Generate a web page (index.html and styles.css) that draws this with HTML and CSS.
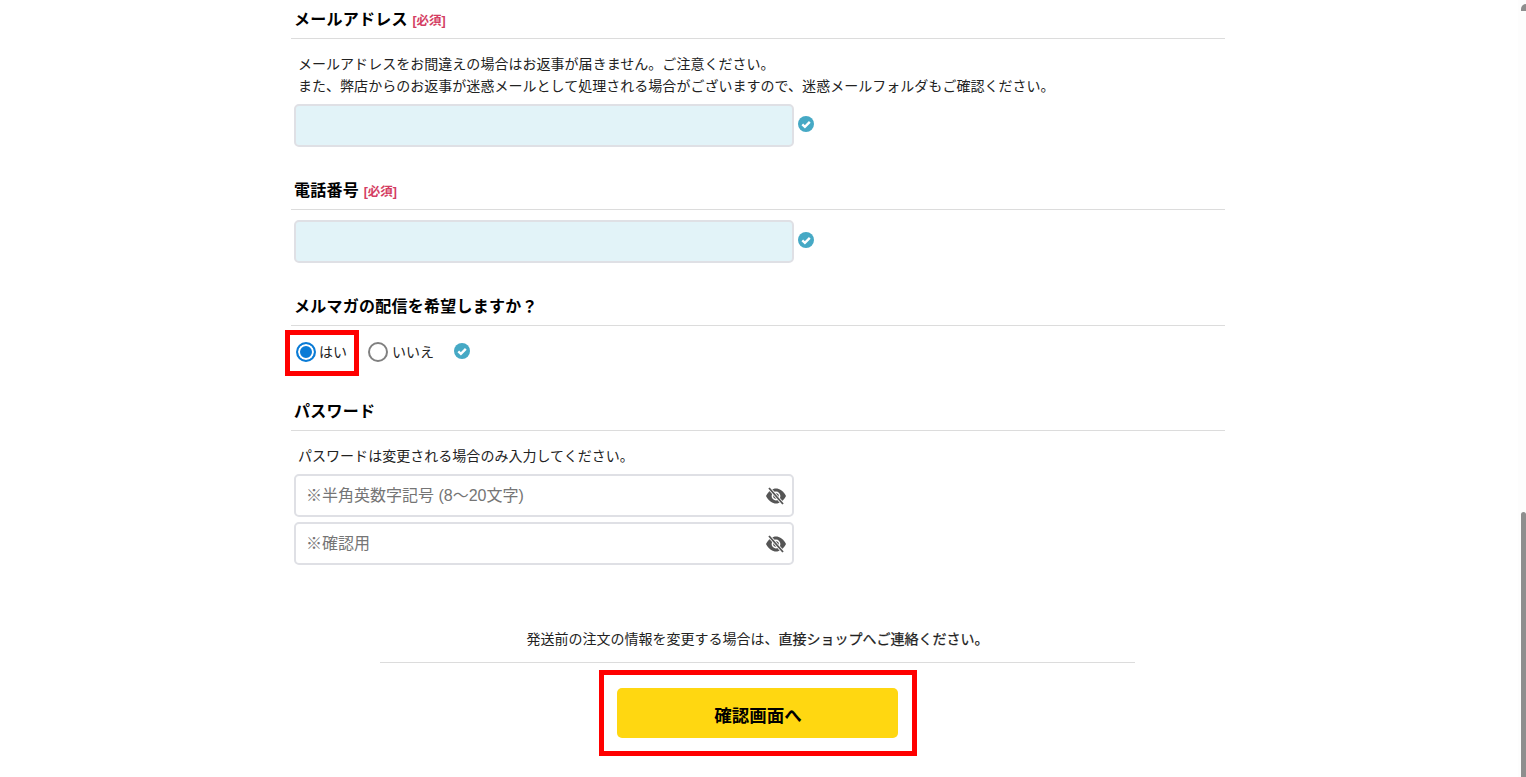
FILE: index.html
```html
<!DOCTYPE html>
<html lang="ja">
<head>
    <meta charset="UTF-8">
    <meta name="viewport" content="width=device-width, initial-scale=1.0">
    <title>お客様情報の変更</title>
    <link rel="stylesheet" href="styles.css">
</head>
<body>

    <svg class="icon-defs" width="0" height="0">
        <symbol id="check" viewBox="0 0 16 16">
            <circle cx="8" cy="8" r="8" fill="#46a9c5"/>
            <path d="M4.3 8.3 L6.9 10.8 L11.8 5.8" fill="none" stroke="#fff" stroke-width="2.4"/>
        </symbol>
        <symbol id="eye-off" viewBox="0 0 22 18">
            <path d="M1 9 C4 3.5 7.5 1.5 11 1.5 C14.5 1.5 18 3.5 21 9 C18 14.5 14.5 16.5 11 16.5 C7.5 16.5 4 14.5 1 9 Z" fill="#555"/>
            <circle cx="11" cy="9" r="3.6" fill="none" stroke="#fff" stroke-width="1.6"/>
            <path d="M4 1 L18 17" stroke="#fff" stroke-width="3.4"/>
            <path d="M4 1 L18 17" stroke="#555" stroke-width="1.8"/>
        </symbol>
    </svg>

    <form class="form">
        <section class="field field-mail">
            <h3 class="field-title">メールアドレス <span class="required">[必須]</span></h3>
            <p class="note">メールアドレスをお間違えの場合はお返事が届きません。ご注意ください。<br>また、弊店からのお返事が迷惑メールとして処理される場合がございますので、迷惑メールフォルダもご確認ください。</p>
            <div class="input-row">
                <input class="text-input filled" type="text">
                <svg class="check"><use href="#check"/></svg>
            </div>
        </section>

        <section class="field field-tel">
            <h3 class="field-title">電話番号 <span class="required">[必須]</span></h3>
            <div class="input-row">
                <input class="text-input filled" type="text">
                <svg class="check"><use href="#check"/></svg>
            </div>
        </section>

        <section class="field field-news">
            <h3 class="field-title">メルマガの配信を希望しますか？</h3>
            <div class="radio-row">
                <label class="radio-label marked"><input type="radio" name="news" checked>はい</label>
                <label class="radio-label"><input type="radio" name="news">いいえ</label>
                <svg class="check"><use href="#check"/></svg>
            </div>
        </section>

        <section class="field field-pass">
            <h3 class="field-title">パスワード</h3>
            <p class="note">パスワードは変更される場合のみ入力してください。</p>
            <div class="pass-box">
                <input class="text-input" type="text" placeholder="※半角英数字記号 (8〜20文字)">
                <svg class="eye"><use href="#eye-off"/></svg>
            </div>
            <div class="pass-box">
                <input class="text-input" type="text" placeholder="※確認用">
                <svg class="eye"><use href="#eye-off"/></svg>
            </div>
        </section>

        <div class="submit-area">
            <p class="submit-note">発送前の注文の情報を変更する場合は、<span class="medium">直接ショップへご連絡ください。</span></p>
            <div class="submit-frame">
                <button class="submit-btn" type="button">確認画面へ</button>
            </div>
        </div>
    </form>

    <div class="scrollbar">
        <div class="scrollbar-cap"></div>
        <div class="scrollbar-thumb"></div>
    </div>

</body>
</html>
```

FILE: styles.css
```css
html, body {
    height: 100%;
    overflow: hidden;
}
body {
    margin: 0;
    background-color: #fff;
    color: #222;
    font-family: "Liberation Sans", "Noto Sans CJK JP", sans-serif;
    font-size: 14px;
}
.icon-defs {
    position: absolute;
}
.form {
    width: 934px;
    margin-left: 291px;
    padding-top: 8px;
}
.field-title {
    margin: 0;
    padding: 0 3px 7px;
    height: 23px;
    line-height: 23px;
    border-bottom: 1px solid #dcdcdc;
    color: #000;
    font-size: 16px;
    font-weight: 700;
    letter-spacing: 0.25px;
    box-sizing: content-box;
}
.required {
    color: #d43d62;
    font-size: 12.5px;
    font-weight: 700;
    letter-spacing: 0;
}
.note {
    margin: 14px 0 0 7px;
    line-height: 22px;
    letter-spacing: 0.03px;
}
.input-row {
    display: flex;
    align-items: center;
    gap: 4px;
    margin: 7px 0 0 3px;
}
.text-input {
    box-sizing: border-box;
    width: 500px;
    height: 43px;
    padding: 0 10px;
    border: 2px solid #dfe0e5;
    border-radius: 5px;
    background-color: #fff;
    font-family: inherit;
    font-size: 16px;
    outline: none;
}
.text-input.filled {
    background-color: #e2f3f8;
}
.text-input::placeholder {
    color: #757575;
}
.check {
    width: 16px;
    height: 16px;
}
.input-row .check {
    margin-bottom: 3px;
}
.field-tel {
    margin-top: 32px;
}
.field-tel .input-row {
    margin-top: 10px;
}
.field-news {
    margin-top: 32px;
}
.radio-row {
    display: flex;
    align-items: center;
    height: 40px;
    margin-top: 5px;
    padding-left: 5px;
}
.radio-label {
    display: flex;
    align-items: center;
    gap: 4px;
    margin-right: 20px;
    position: relative;
}
.radio-label.marked {
    gap: 3px;
    margin-right: 21px;
}
.radio-label input {
    appearance: none;
    box-sizing: border-box;
    width: 20px;
    height: 20px;
    margin: 1px 0 0;
    border: 2px solid #808080;
    border-radius: 50%;
    background-color: #fff;
}
.radio-label input:checked {
    border-color: #0a7bd6;
    box-shadow: inset 0 0 0 2px #fff;
    background-color: #0a7bd6;
}
.marked::after {
    content: "";
    position: absolute;
    left: -11px;
    top: -11px;
    width: 74px;
    height: 46px;
    border: 5px solid #f00;
    box-sizing: border-box;
}
.field-pass {
    margin-top: 29px;
}
.field-pass .note {
    margin-top: 14px;
}
.pass-box {
    position: relative;
    width: 500px;
    margin: 7px 0 0 3px;
}
.pass-box + .pass-box {
    margin-top: 5px;
}
.pass-box .text-input {
    display: block;
}
.eye {
    position: absolute;
    right: 7px;
    top: 13px;
    width: 22px;
    height: 18px;
}
.submit-area {
    width: 755px;
    margin: 64px 0 0 89px;
    text-align: center;
}
.submit-note {
    margin: 0;
    padding-bottom: 12px;
    line-height: 21px;
    border-bottom: 1px solid #dcdcdc;
}
.medium {
    -webkit-text-stroke: 0.25px;
}
.submit-frame {
    box-sizing: border-box;
    width: 318px;
    height: 86px;
    margin: 7px auto 0;
    padding: 13px 0 0 13px;
    border: 5px solid #f00;
    text-align: left;
}
.submit-btn {
    display: block;
    width: 281px;
    height: 50px;
    padding: 2px 0 0 2px;
    border: none;
    border-radius: 5px;
    background-color: #ffd711;
    color: #000;
    font-family: inherit;
    font-size: 17.5px;
    font-weight: 700;
    cursor: pointer;
}
.scrollbar {
    position: fixed;
    top: 0;
    right: 0;
    bottom: 0;
    width: 8px;
    background-color: #fdfdfd;
}
.scrollbar-cap {
    position: absolute;
    top: 4px;
    left: 3px;
    right: 0;
    height: 7px;
    border-radius: 5px 0 0 0;
    background-color: #8e8e8e;
}
.scrollbar-thumb {
    position: absolute;
    top: 512px;
    bottom: 0;
    left: 3px;
    right: 0;
    border-radius: 3px 3px 0 0;
    background-color: #8e8e8e;
}
```
